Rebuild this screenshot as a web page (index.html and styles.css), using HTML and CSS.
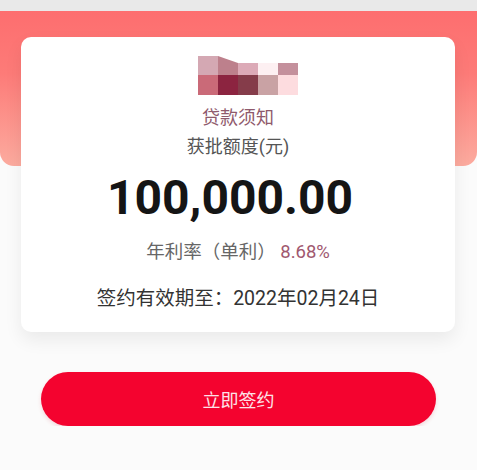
FILE: index.html
```html
<!DOCTYPE html>
<html lang="zh-CN">
<head>
<meta charset="utf-8">
<title>贷款须知</title>
<link rel="stylesheet" href="styles.css">
</head>
<body>
<div class="topbar"></div>
<div class="band"></div>
<main class="card">
  <div class="mosaic-row">
    <div class="mosaic">
      <i class="c c1"></i><i class="c c2"></i><i class="c c3"></i><i class="c c4"></i><i class="c c5"></i>
      <i class="c d1"></i><i class="c d2"></i><i class="c d3"></i><i class="c d4"></i><i class="c d5"></i>
    </div>
  </div>
  <div class="notice">贷款须知</div>
  <div class="label">获批额度(元)</div>
  <div class="amount">100,000.00</div>
  <div class="rate">年利率（单利） <span class="rate-val">8.68%</span></div>
  <div class="expire">签约有效期至：2022年02月24日</div>
</main>
<button class="sign-btn">立即签约</button>
</body>
</html>
```
FILE: styles.css
```css
* { box-sizing: border-box; }
body {
  margin: 0;
  background: #fbfbfb;
  font-family: "Roboto", "Noto Sans CJK SC", sans-serif;
}
.topbar {
  height: 11px;
  background: #e9e9e9;
}
.band {
  height: 155px;
  background: linear-gradient(180deg, #fd6e6f 0%, #fd7b78 40%, #fcab9f 100%);
  border-radius: 0 0 14px 14px;
}
.card {
  position: relative;
  margin: -129px 22px 0 21px;
  height: 295px;
  background: #fff;
  border-radius: 10px;
  box-shadow: 0 8px 18px rgba(0, 0, 0, 0.07);
  display: flex;
  flex-direction: column;
  align-items: center;
  padding-top: 18px;
}
.mosaic-row {
  display: flex;
  justify-content: center;
  width: 100%;
}
.mosaic {
  margin-left: 20px;
  display: grid;
  grid-template-columns: repeat(5, 20px);
  grid-template-rows: 20px 20px;
}
.c { display: block; }
.c1 { background: #d4a8b3; margin-top: 1px; }
.c2 { background: #bd808c; clip-path: polygon(0 5%, 100% 40%, 100% 100%, 0 100%); }
.c3 { background: #dcaab7; margin-top: 8px; }
.c4 { background: #fdf0f2; margin-top: 8px; }
.c5 { background: #c4909c; margin-top: 8px; }
.d1 { background: #ca6a78; }
.d2 { background: #8c2440; }
.d3 { background: #853c4a; }
.d4 { background: #c9a2a4; }
.d5 { background: #fddcdf; }
.notice {
  margin-top: 11px;
  font-size: 18px;
  line-height: 24px;
  color: #8f5a6c;
}
.label {
  margin-top: 5px;
  font-size: 18px;
  line-height: 24px;
  color: #555;
}
.amount {
  margin-top: 11px;
  margin-right: 16px;
  font-size: 48px;
  line-height: 56px;
  font-weight: 700;
  color: #151515;
}
.rate {
  margin-top: 14px;
  font-size: 18.5px;
  line-height: 24px;
  color: #666;
}
.rate-val { color: #a0586f; }
.expire {
  margin-top: 22px;
  font-size: 19.5px;
  line-height: 26px;
  color: #333;
}
.sign-btn {
  display: block;
  margin: 40px 41px 0 41px;
  width: calc(100% - 82px);
  height: 54px;
  border: none;
  border-radius: 27px;
  background: #f4032f;
  color: #fde2e7;
  font-family: "Noto Sans CJK SC", sans-serif;
  font-size: 18px;
  box-shadow: 0 2px 4px rgba(200, 0, 40, 0.15);
}
```
